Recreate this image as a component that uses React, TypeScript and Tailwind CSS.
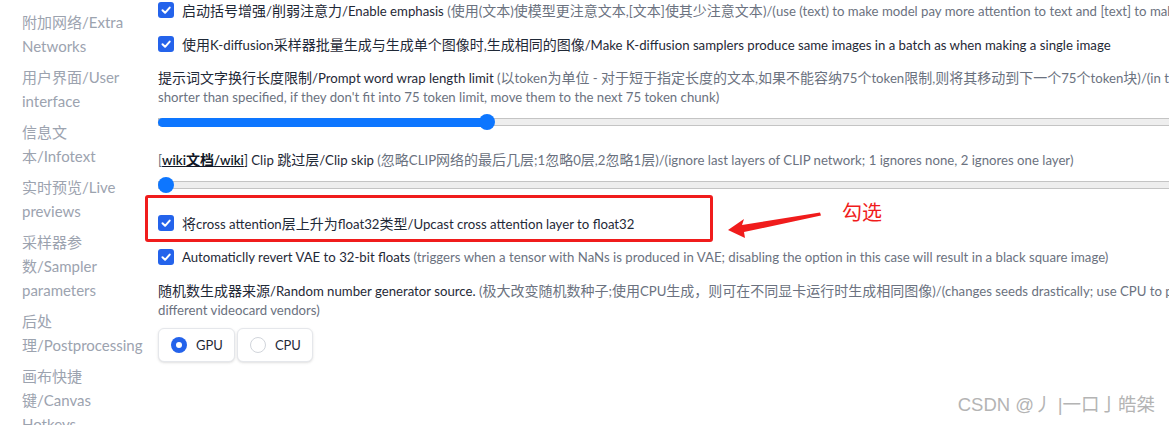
import React from "react";

const FONT = "font-['Lato','Noto_Sans_CJK_SC',sans-serif]";

function T({ s }: { s: string }) {
  const parts = s.split(/([\u3000-\u303f\u3400-\u9fff\uff00-\uffef]+)/);
  return (
    <>
      {parts.map((p, i) =>
        i % 2 === 1 ? (
          <span key={i} className="text-[14px] font-['Noto_Sans_CJK_SC',sans-serif]">
            {p}
          </span>
        ) : (
          <React.Fragment key={i}>{p}</React.Fragment>
        )
      )}
    </>
  );
}

function Check() {
  return (
    <span className="w-4 h-4 rounded-[3px] bg-[#2463eb] flex items-center justify-center shrink-0">
      <svg viewBox="0 0 16 16" className="w-4 h-4">
        <path d="M4.5 8.2l2.6 2.6 4.6-5.2" stroke="white" strokeWidth="2" fill="none" strokeLinecap="round" strokeLinejoin="round" />
      </svg>
    </span>
  );
}

function CheckRow({ label, desc, className = "" }: { label: string; desc?: string; className?: string }) {
  return (
    <div className={`flex items-center gap-2 h-5 whitespace-nowrap ${className}`}>
      <Check />
      <span className="text-[#1f2937]">
        <T s={label} />
        {desc && (
          <span className="text-[#6b7280]">
            {" "}
            <T s={desc} />
          </span>
        )}
      </span>
    </div>
  );
}

function Slider({ pos, className = "" }: { pos: number; className?: string }) {
  return (
    <div className={`relative h-4 flex items-center ${className}`}>
      <div className="h-2 w-full border border-[#c4c4c4] bg-[#eeeeee]" />
      {pos > 8 && <div className="absolute left-0 top-[3.5px] h-[9px] rounded-full bg-[#0d76ff]" style={{ width: pos }} />}
      <div className="absolute top-0 w-4 h-4 rounded-full bg-[#0d76ff]" style={{ left: pos - 8 }} />
    </div>
  );
}

const sidebar = [
  ["附加网络/Extra", "Networks"],
  ["用户界面/User", "interface"],
  ["信息文", "本/Infotext"],
  ["实时预览/Live", "previews"],
  ["采样器参", "数/Sampler", "parameters"],
  ["后处", "理/Postprocessing"],
  ["画布快捷", "键/Canvas", "Hotkeys"],
];

export default function App() {
  return (
    <div className={`relative w-[1169px] h-[425px] overflow-hidden bg-white flex ${FONT}`}>
      <div className="w-[158px] shrink-0 pl-[22px] pt-[10px] flex flex-col gap-[7px] text-[15px] leading-6 text-[#9ca3af]">
        {sidebar.map((lines, i) => (
          <div key={i} className="whitespace-nowrap">
            {lines.map((l, j) => (
              <div key={j} className="h-6">
                {l}
              </div>
            ))}
          </div>
        ))}
      </div>

      <div className="w-[1100px] shrink-0 flex flex-col text-[13.2px] leading-5">
        <CheckRow
          label="启动括号增强/削弱注意力/Enable emphasis"
          desc="(使用(文本)使模型更注意文本,[文本]使其少注意文本)/(use (text) to make model pay more attention to text and [text] to make it pay less attention)"
        />
        <CheckRow
          className="mt-[14px]"
          label="使用K-diffusion采样器批量生成与生成单个图像时,生成相同的图像/Make K-diffusion samplers produce same images in a batch as when making a single image"
        />

        <div className="mt-[13px] whitespace-nowrap">
          <div className="h-5">
            <span className="text-[#1f2937]">
              <T s="提示词文字换行长度限制/Prompt word wrap length limit" />
            </span>
            <span className="text-[#6b7280]">
              {" "}
              <T s="(以token为单位 - 对于短于指定长度的文本,如果不能容纳75个token限制,则将其移动到下一个75个token块)/(in token units - for texts" />
            </span>
          </div>
          <div className="h-5 text-[#6b7280]">
            shorter than specified, if they don't fit into 75 token limit, move them to the next 75 token chunk)
          </div>
        </div>

        <Slider pos={329} className="mt-[7px]" />

        <div className="mt-[19px] h-5 whitespace-nowrap">
          <span className="text-[#6b7280]">[</span>
          <span className="text-[#111827] font-semibold underline">
            <T s="wiki文档/wiki" />
          </span>
          <span className="text-[#1f2937]">
            <T s="] Clip 跳过层/Clip skip" />
          </span>
          <span className="text-[#6b7280]">
            {" "}
            <T s="(忽略CLIP网络的最后几层;1忽略0层,2忽略1层)/(ignore last layers of CLIP network; 1 ignores none, 2 ignores one layer)" />
          </span>
        </div>

        <Slider pos={8} className="mt-[8px]" />

        <CheckRow className="mt-[20px]" label="将cross attention层上升为float32类型/Upcast cross attention layer to float32" />

        <CheckRow
          className="mt-[14px]"
          label="Automaticlly revert VAE to 32-bit floats"
          desc="(triggers when a tensor with NaNs is produced in VAE; disabling the option in this case will result in a black square image)"
        />

        <div className="mt-[13px] whitespace-nowrap">
          <div className="h-5">
            <span className="text-[#1f2937]">
              <T s="随机数生成器来源/Random number generator source." />
            </span>
            <span className="text-[#6b7280]">
              {" "}
              <T s="(极大改变随机数种子;使用CPU生成，则可在不同显卡运行时生成相同图像)/(changes seeds drastically; use CPU to produce the same picture across" />
            </span>
          </div>
          <div className="h-5 text-[#6b7280]">different videocard vendors)</div>
        </div>

        <div className="mt-[8px] flex gap-[2px] text-[13px] text-[#1f2937]">
          <div className="flex items-center gap-[9px] h-[34px] pl-[12px] pr-[11px] border border-[#e5e7eb] rounded-md shadow-sm bg-white">
            <span className="w-4 h-4 rounded-full bg-[#2463eb] flex items-center justify-center">
              <span className="w-[6px] h-[6px] rounded-full bg-white" />
            </span>
            GPU
          </div>
          <div className="flex items-center gap-[9px] h-[34px] pl-[12px] pr-[11px] border border-[#e5e7eb] rounded-md shadow-sm bg-white">
            <span className="w-4 h-4 rounded-full border border-[#d1d5db] bg-white" />
            CPU
          </div>
        </div>
      </div>

      {/* annotation overlays */}
      <div className="absolute left-[145px] top-[195px] w-[568px] h-[47px] border-[3px] border-[#f01c1c] rounded-[3px]" />
      <svg className="absolute left-[720px] top-[205px]" width="110" height="40" viewBox="720 205 110 40">
        <polygon points="728,230 744,219 742,225 820,212.5 821,215.5 744,232 745,238" fill="#f01c1c" />
      </svg>
      <div className="absolute left-[842px] top-[199px] text-[20px] leading-[26px] text-[#f01c1c] font-['Noto_Sans_CJK_SC',sans-serif]">
        勾选
      </div>
      <div className="absolute right-[14px] top-[392px] text-[18.5px] leading-[26px] text-[#b4b4b4] font-['Liberation_Sans','Noto_Sans_CJK_SC',sans-serif] whitespace-nowrap">
        CSDN @丿 |一口亅皓桀
      </div>
    </div>
  );
}
